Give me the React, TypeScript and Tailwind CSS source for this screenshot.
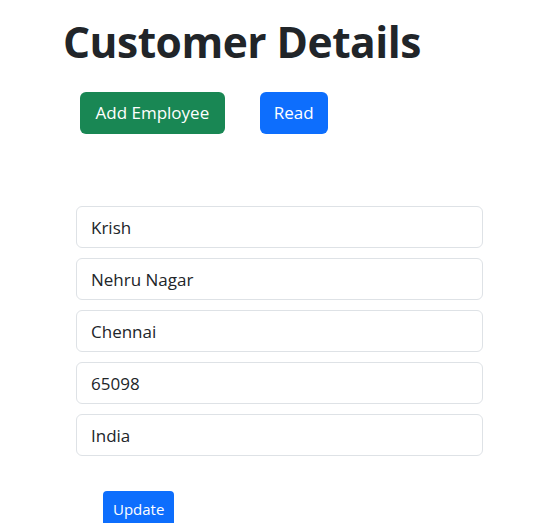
import React from 'react';

const fields = ['Krish', 'Nehru Nagar', 'Chennai', '65098', 'India'];

export default function App() {
  return (
    <div className="min-h-[523px] bg-white text-[#212529]" style={{ fontFamily: '"Open Sans", "Noto Sans", sans-serif' }}>
      <div className="pl-[63px] pt-[16px]">
        <h1 className="text-[42.5px] font-bold leading-[52px] tracking-[-0.5px]">Customer Details</h1>
      </div>
      <div className="flex gap-[35px] pl-[80px] mt-[24px]">
        <button className="h-[42px] px-[15.5px] rounded-[6px] bg-[#198754] text-white text-[17px]">Add Employee</button>
        <button className="h-[42px] px-[14px] rounded-[6px] bg-[#0d6efd] text-white text-[17px]">Read</button>
      </div>
      <div className="flex flex-col gap-[10px] ml-[76px] w-[407px] mt-[72px]">
        {fields.map(f => (
          <input
            key={f}
            defaultValue={f}
            className="h-[42px] px-[14px] border border-[#dee2e6] rounded-[6px] text-[17px] text-[#212529] outline-none"
          />
        ))}
      </div>
      <div className="pl-[103px] mt-[35px]">
        <button className="h-[36px] px-[10px] rounded-[4px] bg-[#0d6efd] text-white text-[15px]">Update</button>
      </div>
    </div>
  );
}
